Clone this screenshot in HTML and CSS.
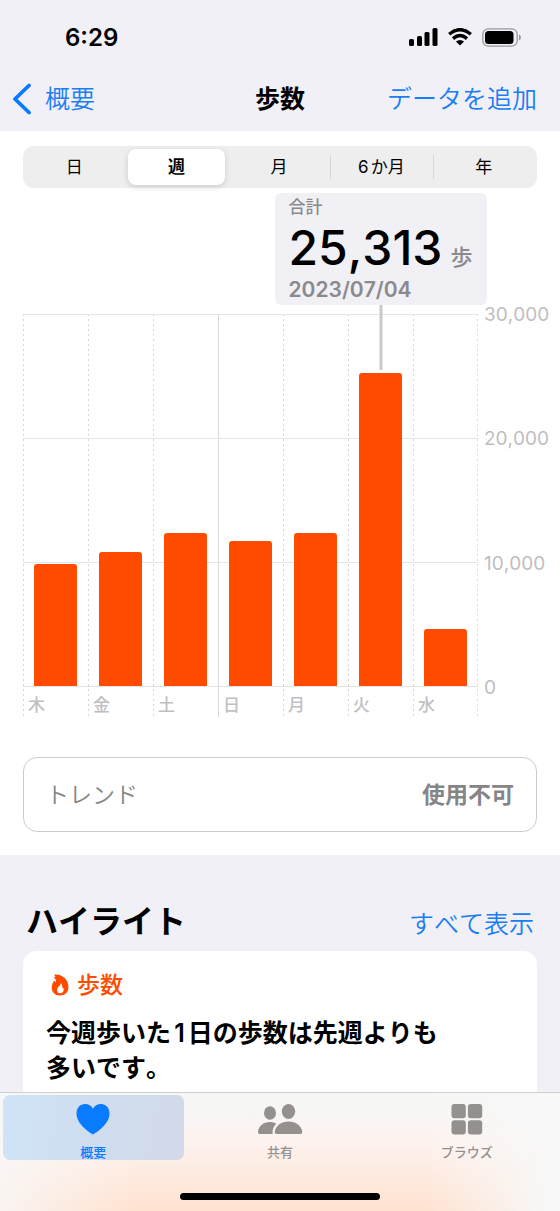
FILE: index.html
```html
<!DOCTYPE html>
<html lang="ja">
<head>
<meta charset="utf-8">
<meta name="viewport" content="width=device-width, initial-scale=1">
<title>歩数</title>
<link rel="stylesheet" href="styles.css">
</head>
<body>
<div class="app">
  <header class="header">
    <div class="status">
      <time class="clock">6:29</time>
      <div class="status-icons">
        <svg width="29" height="18" viewBox="0 0 29 18" aria-hidden="true"><rect x="0" y="11" width="5" height="7" rx="1.5"/><rect x="8" y="8" width="5" height="10" rx="1.5"/><rect x="15.500" y="4" width="5" height="14" rx="1.500"/><rect x="23.500" y="0" width="5" height="18" rx="1.500"/></svg>
        <svg width="24" height="18" viewBox="0 0 24 18" aria-hidden="true"><g fill="none" stroke="#000" stroke-width="3.400"><path d="M1.200 6.300Q12-3 22.800 6.300"/><path d="M5 10.600Q12 4.600 19 10.600"/></g><path d="M12 17.600L7.900 13.600Q12 10.400 16.100 13.600Z"/></svg>
        <svg width="40" height="19" viewBox="0 0 40 19" aria-hidden="true"><rect x=".8" y=".8" width="34.400" height="17.400" rx="5.500" fill="none" stroke="#98979c" stroke-width="1.300"/><rect x="3" y="3" width="28.500" height="13" rx="3.500"/><path d="M37 6.500Q39 7.500 39 9.500T37 12.500Z" fill="#98979c"/></svg>
      </div>
    </div>
    <nav class="navbar">
      <a class="back" href="#"><svg width="20" height="32" viewBox="0 0 20 32" aria-hidden="true"><path d="M17 2.500L3 16L17 29.500" fill="none" stroke="#087bff" stroke-width="3.800" stroke-linecap="round" stroke-linejoin="round"/></svg>概要</a>
      <h1 class="title">歩数</h1>
      <a class="add" href="#">データを追加</a>
    </nav>
  </header>

  <main class="content">
    <section class="panel">
      <div class="segments">
        <button class="segment" type="button">日</button>
        <button class="segment selected" type="button">週</button>
        <button class="segment" type="button">月</button>
        <button class="segment divided" type="button">6か月</button>
        <button class="segment divided" type="button">年</button>
      </div>

      <div class="chart">
        <div class="days">
          <div class="day"><div class="track"><div class="bar" style="height:32.800%"></div></div><span class="day-name">木</span></div>
          <div class="day"><div class="track"><div class="bar" style="height:36.100%"></div></div><span class="day-name">金</span></div>
          <div class="day"><div class="track"><div class="bar" style="height:41.100%"></div></div><span class="day-name">土</span></div>
          <div class="day week-start"><div class="track"><div class="bar" style="height:38.900%"></div></div><span class="day-name">日</span></div>
          <div class="day"><div class="track"><div class="bar" style="height:41.100%"></div></div><span class="day-name">月</span></div>
          <div class="day"><div class="track"><div class="bar" style="height:84.200%"></div>
            <div class="stem" style="bottom:85%"></div>
            <div class="callout">
              <span class="callout-label">合計</span>
              <span class="callout-value">25,313<span class="unit">歩</span></span>
              <time class="callout-date">2023/07/04</time>
            </div></div><span class="day-name">火</span></div>
          <div class="day last"><div class="track"><div class="bar" style="height:15.200%"></div></div><span class="day-name">水</span></div>
        </div>
        <div class="scale"><span>30,000</span><span>20,000</span><span>10,000</span><span>0</span></div>
      </div>

      <button class="trend" type="button"><span>トレンド</span><span class="trend-value">使用不可</span></button>
    </section>

    <section class="highlights">
      <div class="section-head">
        <h2 class="section-title">ハイライト</h2>
        <a class="show-all" href="#">すべて表示</a>
      </div>
      <article class="card">
        <h3 class="card-kind"><svg width="18" height="22" viewBox="0 0 18 22" aria-hidden="true"><path fill="#ff4b00" fill-rule="evenodd" d="M3 .5C10-.3 17.500 4.500 17.500 13C17.500 18.500 14 21.500 9 21.500S.7 18.200.7 13.500C.7 10.500 2.100 8.300 3.500 6.500L4.500 8.500C5.500 7 5.300 4.700 2.500 3.700L4.500 2.700ZM9.800 9C10 11.500 6 12.800 6 16C6 18 7.300 19.300 9.200 19.300S12.700 18 12.700 15.800C12.700 14.700 12.300 13.800 11.800 13.200L11 14.400C11.400 12.200 11.100 10.200 9.800 9Z"/></svg>歩数</h3>
        <p class="card-text">今週歩いた1日の歩数は先週よりも<br>多いです。</p>
      </article>
    </section>
  </main>

  <footer class="tabbar">
    <nav class="tabs">
      <a class="tab active" href="#"><svg width="34" height="32" viewBox="0 0 34 32" aria-hidden="true"><path d="M17 31.500C14.500 30 .5 21.500 .5 10.500C.5 4.800 4.300 1 9 1C12.700 1 15.600 2.800 17 5.700C18.400 2.800 21.300 1 25 1C29.700 1 33.500 4.800 33.500 10.500C33.500 21.500 19.500 30 17 31.500Z" fill="currentColor"/></svg>概要</a>
      <a class="tab" href="#"><svg width="46" height="32" viewBox="0 0 46 32" aria-hidden="true"><g fill="currentColor"><ellipse cx="13" cy="10" rx="6" ry="6.800"/><path d="M3 31C1.200 31 .8 30 1 28.500C1.800 23 6.700 19 12.500 19C15.200 19 17.500 19.500 19.300 20.800C16.800 23 15.200 26.500 15.600 31Z"/><ellipse cx="31.500" cy="8.500" rx="6.700" ry="7.500"/><path d="M20 31C18.200 31 17.600 30.300 17.800 28.500C18.800 22.500 24.500 18.500 31.500 18.500S44.200 22.500 45.200 28.500C45.400 30.300 44.800 31 43 31Z"/></g></svg>共有</a>
      <a class="tab" href="#"><svg width="32" height="32" viewBox="0 0 32 32" aria-hidden="true"><g fill="currentColor"><rect x=".5" y="1" width="14.300" height="14.300" rx="3"/><rect x="16.900" y="1" width="14.300" height="14.300" rx="3"/><rect x=".5" y="17.200" width="14.300" height="14.300" rx="3"/><rect x="16.900" y="17.200" width="14.300" height="14.300" rx="3"/></g></svg>ブラウズ</a>
    </nav>
    <div class="home-indicator"></div>
  </footer>
</div>
</body>
</html>
```
FILE: styles.css
```css
* { box-sizing: border-box; }
body {
  margin: 0;
  font-family: Inter, "Noto Sans CJK JP", sans-serif;
  font-kerning: none;
  text-autospace: normal;
  color: #000;
  background: #f1f0f6;
}
a { text-decoration: none; color: #1a7df5; }
h1, h2, h3, p { margin: 0; }
button { font: inherit; font-kerning: none; color: inherit; border: 0; background: none; cursor: pointer; }
svg { display: block; flex: none; }

.app { display: flex; flex-direction: column; height: 100vh; }

.header { flex: none; background: #f1f0f6; }
.status {
  display: flex;
  justify-content: space-between;
  align-items: center;
  height: 74px;
  padding: 0 38px 0 65px;
}
.clock { font-size: 24px; font-weight: 600; line-height: 34px; padding-top: 2px; }
.status-icons { display: flex; align-items: center; gap: 10px; }
.navbar {
  display: grid;
  grid-template-columns: 1fr auto 1fr;
  align-items: center;
  height: 57px;
  padding: 0 23px 8px;
  font-size: 25px;
  line-height: 36px;
  font-weight: 350;
}
.back { display: flex; align-items: center; gap: 13px; margin-left: -11px; }
.title { font-size: 25px; font-weight: 700; }
.add { justify-self: end; }

.content { flex: 1; min-height: 0; overflow-y: auto; scrollbar-width: none; }
.panel { background: #fff; padding: 15px 23px 23px; }

.segments {
  display: grid;
  grid-template-columns: repeat(5, 1fr);
  height: 42px;
  padding-right: 2px;
  border-radius: 11px;
  background: #eee;
}
.segment {
  margin: 3px 0;
  padding: 0;
  font-size: 17px;
  line-height: 24px;
}
.segment.selected {
  margin: 3px;
  border-radius: 8px;
  background: #fff;
  font-weight: 700;
  box-shadow: 0 2px 6px rgba(0, 0, 0, .14);
}
.segment.divided {
  background: linear-gradient(#d6d6d8, #d6d6d8) left center / 1px 24px no-repeat;
}

.chart { display: flex; margin-top: 126px; margin-right: -15px; }
.days {
  flex: 1;
  display: grid;
  grid-template-columns: repeat(7, 1fr);
}
.day {
  display: flex;
  flex-direction: column;
  background: repeating-linear-gradient(#d6d6d6 0 2px, transparent 2px 5px) left top / 1px 100% no-repeat;
}
.day.week-start { background: linear-gradient(#d9d9db, #d9d9db) left top / 1px 100% no-repeat; }
.day.last {
  background:
    repeating-linear-gradient(#d6d6d6 0 2px, transparent 2px 5px) left top / 1px 100% no-repeat,
    repeating-linear-gradient(#dcdcdc 0 2px, transparent 2px 5px) right top / 1px 100% no-repeat;
}
.track {
  position: relative;
  display: flex;
  align-items: flex-end;
  justify-content: center;
  height: 373px;
  border-bottom: 1px solid #e2e2e4;
  background: linear-gradient(#e6e6e8 1px, transparent 1px) top / 100% 124px;
}
.bar { width: 65%; border-radius: 3px 3px 0 0; background: #ff4b00; }
.day-name {
  padding: 7px 0 0 5px;
  font-size: 17px;
  line-height: 23px;
  font-weight: 500;
  color: #c0c0c2;
}
.scale {
  flex: none;
  display: flex;
  flex-direction: column;
  justify-content: space-between;
  width: 74px;
  height: 397px;
  margin-top: -11px;
  padding-left: 6px;
  font-size: 19px;
  line-height: 24px;
  color: #bebec0;
}

.stem {
  position: absolute;
  top: -9px;
  left: 50%;
  width: 3px;
  transform: translateX(-50%);
  background: #c9c9cc;
}
.callout {
  position: absolute;
  bottom: calc(100% + 9px);
  left: 50%;
  z-index: 1;
  display: flex;
  flex-direction: column;
  width: 212px;
  padding: 2px 14px;
  transform: translateX(-50%);
  border-radius: 6px;
  background: #f1f0f5;
  color: #8a898e;
  white-space: nowrap;
}
.callout-label { font-size: 17px; line-height: 24px; font-weight: 500; }
.callout-value {
  display: flex;
  align-items: baseline;
  gap: 8px;
  height: 58px;
  font-size: 48px;
  line-height: 58px;
  font-weight: 500;
  color: #000;
}
.unit { font-size: 22px; line-height: 32px; font-weight: 500; color: #8a898e; }
.callout-date { font-size: 21px; line-height: 26px; font-weight: 600; }

.trend {
  display: flex;
  justify-content: space-between;
  align-items: center;
  width: 100%;
  height: 75px;
  margin-top: 40px;
  padding: 0 22px;
  border: 1px solid #cbcbcd;
  border-radius: 14px;
  font-size: 23px;
  line-height: 32px;
  font-weight: 350;
  color: #858585;
}
.trend-value { font-weight: 600; }

.highlights { padding: 44px 23px 0; }
.section-head { display: flex; justify-content: space-between; align-items: baseline; padding: 0 3px; }
.section-title { font-size: 32px; line-height: 46px; font-weight: 700; }
.show-all { font-size: 25px; line-height: 36px; font-weight: 350; }
.card {
  margin-top: 6px;
  padding: 18px 23px 80px;
  border-radius: 14px;
  background: #fff;
}
.card-kind {
  display: flex;
  align-items: center;
  gap: 8px;
  padding-left: 5px;
  font-size: 23px;
  line-height: 32px;
  font-weight: 500;
  color: #ff4b00;
}
.card-text { margin-top: 15px; font-size: 25px; line-height: 35px; font-weight: 600; }

.tabbar {
  flex: none;
  display: flex;
  flex-direction: column;
  height: 119px;
  padding: 2px 0 11px;
  border-top: 1px solid #cfcfd1;
  background:
    linear-gradient(90deg, rgba(248, 248, 248, .8) 0, transparent 24%, transparent 76%, #f8f8f8 98%),
    linear-gradient(#f6f6f5 15%, #fdf3ef 40%, #ffe2d0 100%);
}
.tabs { display: grid; grid-template-columns: repeat(3, 1fr); }
.tab {
  display: flex;
  flex-direction: column;
  align-items: center;
  height: 65px;
  margin: 0 3px;
  padding-top: 8px;
  gap: 7px;
  border-radius: 7px;
  font-size: 13px;
  line-height: 20px;
  font-weight: 500;
  color: #94908e;
}
.tab.active { background: linear-gradient(100deg, #d0e4f7, #cfddef 50%, #d3dae9); color: #087bff; }
.home-indicator { width: 200px; height: 7px; margin: auto auto 0; border-radius: 4px; background: #000; }
```
